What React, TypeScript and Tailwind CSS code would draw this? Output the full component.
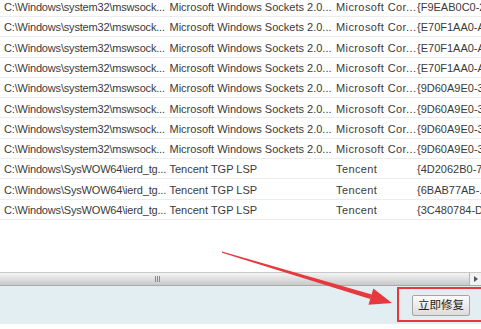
import React from "react";

const rows: [string, string, string, string][] = [
  ["C:\\Windows\\system32\\mswsock...", "Microsoft Windows Sockets 2.0...", "Microsoft Cor...", "{F9EAB0C0-2."],
  ["C:\\Windows\\system32\\mswsock...", "Microsoft Windows Sockets 2.0...", "Microsoft Cor...", "{E70F1AA0-A."],
  ["C:\\Windows\\system32\\mswsock...", "Microsoft Windows Sockets 2.0...", "Microsoft Cor...", "{E70F1AA0-A."],
  ["C:\\Windows\\system32\\mswsock...", "Microsoft Windows Sockets 2.0...", "Microsoft Cor...", "{E70F1AA0-A."],
  ["C:\\Windows\\system32\\mswsock...", "Microsoft Windows Sockets 2.0...", "Microsoft Cor...", "{9D60A9E0-3."],
  ["C:\\Windows\\system32\\mswsock...", "Microsoft Windows Sockets 2.0...", "Microsoft Cor...", "{9D60A9E0-3."],
  ["C:\\Windows\\system32\\mswsock...", "Microsoft Windows Sockets 2.0...", "Microsoft Cor...", "{9D60A9E0-3."],
  ["C:\\Windows\\system32\\mswsock...", "Microsoft Windows Sockets 2.0...", "Microsoft Cor...", "{9D60A9E0-3."],
  ["C:\\Windows\\SysWOW64\\ierd_tg...", "Tencent TGP LSP", "Tencent", "{4D2062B0-7."],
  ["C:\\Windows\\SysWOW64\\ierd_tg...", "Tencent TGP LSP", "Tencent", "{6BAB77AB-..."],
  ["C:\\Windows\\SysWOW64\\ierd_tg...", "Tencent TGP LSP", "Tencent", "{3C480784-D."],
];

export default function App() {
  return (
    <div
      className="relative w-[481px] h-[329px] overflow-hidden bg-white text-[#3a3a3a] text-[11px]"
      style={{ fontFamily: '"Liberation Sans", "Noto Sans CJK SC", sans-serif' }}
    >
      {/* list */}
      <div className="h-[272px] mt-[-3.3px]">
        {rows.map((r, i) => (
          <div
            key={i}
            className="flex items-center h-[20.3px] pt-[2px] border-b border-[#ececec] whitespace-nowrap"
          >
            <div className="w-[169.5px] pl-[4px] shrink-0 tracking-[-0.18px]">{r[0]}</div>
            <div className="w-[166.5px] shrink-0">{r[1]}</div>
            <div className="w-[81px] shrink-0 tracking-[0.4px]">{r[2]}</div>
            <div className="flex-1">{r[3]}</div>
          </div>
        ))}
      </div>

      {/* horizontal scrollbar */}
      <div className="absolute left-0 top-[272px] w-[481px] h-[14px] flex border-t border-[#c9c9c9] border-b border-b-[#a9a9a9] bg-gradient-to-b from-[#f4f4f4] to-[#c9c9c9]">
        <div className="relative flex-1 h-full flex items-center justify-start">
          <div className="ml-[155px] flex gap-[1px]">
            <div className="w-[1px] h-[6px] bg-[#8a8a8a]" />
            <div className="w-[1px] h-[6px] bg-[#8a8a8a]" />
            <div className="w-[1px] h-[6px] bg-[#8a8a8a]" />
          </div>
        </div>
        <div className="w-[12px] h-full border-l border-[#b5b5b5] bg-[#f2f2f2] flex items-center justify-center">
          <svg width="4" height="6" viewBox="0 0 4 6">
            <path d="M0 0 L4 3 L0 6 Z" fill="#555" />
          </svg>
        </div>
      </div>

      {/* footer */}
      <div className="absolute left-0 top-[286px] w-[481px] h-[38px] bg-[#e3eef3] flex items-center justify-end pr-[11px]">
        <button
          className="w-[58px] h-[21px] rounded-[2px] border border-[#a5a5a5] bg-gradient-to-b from-[#fbfbfb] to-[#dcdcdc] text-[11.5px] text-[#222] leading-none"
          style={{ fontFamily: '"Noto Sans CJK SC", sans-serif' }}
        >
          立即修复
        </button>
      </div>

      {/* red annotation box */}
      <div className="absolute left-[397px] top-[287px] w-[90px] h-[35px] border-[2.5px] border-[#e2393d]" />

      {/* red arrow */}
      <svg className="absolute left-0 top-0 pointer-events-none" width="481" height="329">
        <polygon points="222,251.5 371.8,294.6 370.2,298.9 222,252.8" fill="#e6393d" />
        <polygon points="392,303 373.3,288.5 368.5,304.8" fill="#e6393d" />
      </svg>
    </div>
  );
}
